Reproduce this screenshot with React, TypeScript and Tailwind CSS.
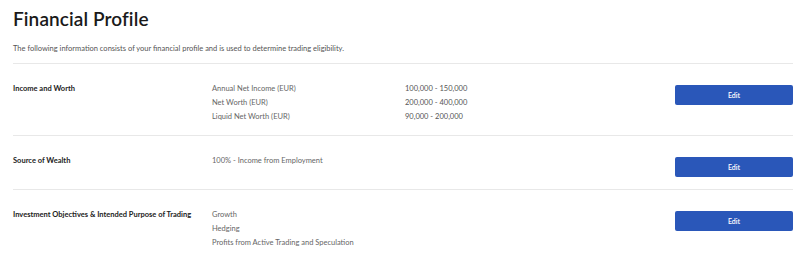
const sections = [
  {
    title: 'Income and Worth',
    rows: [
      { label: 'Annual Net Income (EUR)', value: '100,000 - 150,000' },
      { label: 'Net Worth (EUR)', value: '200,000 - 400,000' },
      { label: 'Liquid Net Worth (EUR)', value: '90,000 - 200,000' },
    ],
  },
  {
    title: 'Source of Wealth',
    rows: [{ label: '100% - Income from Employment', value: '' }],
  },
  {
    title: 'Investment Objectives & Intended Purpose of Trading',
    rows: [
      { label: 'Growth', value: '' },
      { label: 'Hedging', value: '' },
      { label: 'Profits from Active Trading and Speculation', value: '' },
    ],
  },
]

export default function App() {
  return (
    <div className="min-h-screen bg-white pl-[13px] pr-[7px] font-['Lato',sans-serif] text-[#1a1a1a]">
      <h1 className="pt-[7px] text-[19px] leading-[24px] font-semibold tracking-[0.1px]">Financial Profile</h1>
      <p className="mt-[13px] text-[7.5px] leading-[10px] text-[#555]">
        The following information consists of your financial profile and is used to determine trading eligibility.
      </p>

      <div className="mt-[9px] border-t border-[#e8e8e8]">
        {sections.map((section, i) => (
          <div
            key={section.title}
            className={`grid grid-cols-[199px_193px_1fr_118px] pt-[18px] pb-[11px] ${
              i < sections.length - 1 ? 'border-b border-[#e8e8e8]' : ''
            }`}
          >
            <div className="text-[7.5px] leading-[14px] font-bold text-[#222]">{section.title}</div>
            <div className="text-[7.5px] leading-[14px] text-[#666]">
              {section.rows.map((r) => (
                <div key={r.label}>{r.label}</div>
              ))}
            </div>
            <div className="text-[7.5px] leading-[14px] text-[#555]">
              {section.rows.map((r) => (
                <div key={r.label}>{r.value || '\u00a0'}</div>
              ))}
            </div>
            <div className="leading-none">
              <button className="mt-[3px] mb-[1px] block h-5 w-[118px] rounded-[2px] bg-[#2a57b9] text-[7px] font-semibold text-white">
                Edit
              </button>
            </div>
          </div>
        ))}
      </div>
    </div>
  )
}
